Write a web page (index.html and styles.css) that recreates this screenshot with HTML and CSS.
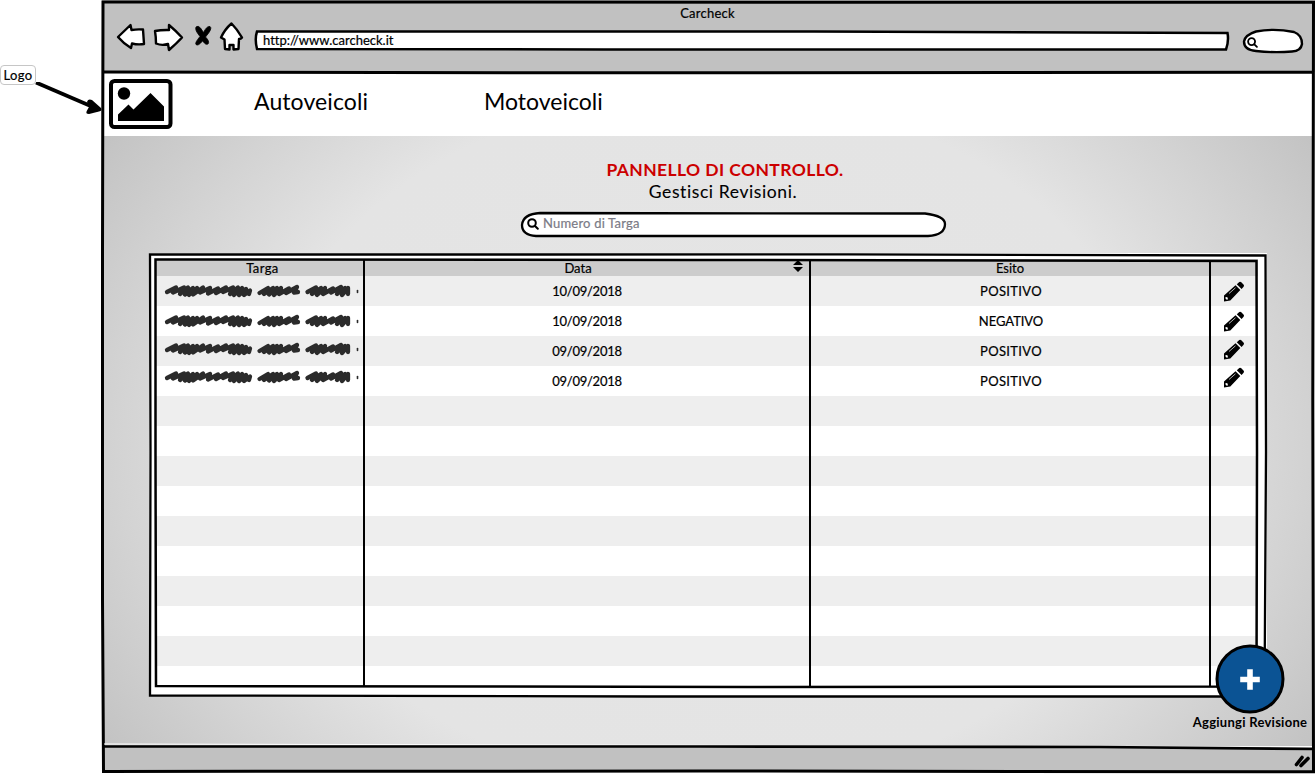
FILE: index.html
```html
<!DOCTYPE html>
<html lang="it">
<head>
<meta charset="utf-8">
<title>Carcheck</title>
<link rel="stylesheet" href="styles.css">
</head>
<body>
<svg class="symbols" aria-hidden="true">
  <symbol id="scribble" viewBox="0 0 196 16">
    <g fill="none" stroke="#2b2b2b" stroke-width="4.300" stroke-linecap="round" stroke-linejoin="round">
      <path d="M3 9 L12 4.500 L9 9.500 L20 4.500 L16 11 L24 4.500 L21 11.500 L29 5 L25 12 L33 5 L29 11.500 L39 4.500 L36 9.500 L46 5 L44 10.500 L54 5.500 L52 10 L62 4.500 L59 9 L69 4.500 L66 11 L74 4.500 L70 12 L78 5 L75 12 L82 6 L80 12 L86 7.500 L85 11"/>
      <path d="M95.500 10 L104 5 L100 11 L109 5 L105 11.500 L113 5 L110 12 L117 5 L115 11 L125 5.500 L122 10 L133 4 L130 9.500 L134 9"/>
      <path d="M143.500 9 L152 4.500 L148 11 L157 5 L153 12 L161 5 L159 11 L169 5.500 L167 9.500 L177 4 L173 11 L181 5 L178 12 L184 5 L184 11"/>
      <path d="M193.500 7.500 v2" stroke-width="1.600"/>
    </g>
  </symbol>
  <symbol id="pencil" viewBox="0 0 22 22">
    <path d="M1 14.500 L12.500 4.300 L17.300 9.100 L7.300 19.500 L1 20.500 Z M13.800 3.300 L16.300 1 Q17.300.3 18.300 1.200 L20.700 3.700 Q21.400 4.700 20.600 5.700 L18.600 7.900 Z"/>
    <path d="M6 12.500 L12.500 6.800" stroke="#fff" stroke-width=".7" fill="none"/>
    <path d="M2.600 16 L4.400 16.300 L5 18.300 L3.800 18.800 L2.500 17.600 Z" fill="#fff"/>
  </symbol>
  <symbol id="lens" viewBox="0 0 12 12">
    <g fill="none" stroke="#000" stroke-width="2" stroke-linecap="round"><circle cx="5" cy="5" r="3.800"/><path d="M8 8 L10.800 10.800"/></g>
  </symbol>
</svg>
<div class="mockup">
  <aside class="notes">
    <span class="callout">Logo</span>
    <svg class="callout-arrow" viewBox="0 0 70 36"><path d="M1 .5 L58 25" fill="none" stroke="#000" stroke-width="3.800"/><path d="M52 20 Q53 16.500 57 18 L66 26 Q67.500 29 64 29.500 L54 32 Q50 32 52 28.500 L54 25 Z"/></svg>
  </aside>
  <div class="browser">
    <header class="chrome">
      <div class="title"><span class="t-title">Carcheck</span></div>
      <div class="toolbar">
        <svg class="nav-icons" viewBox="0 0 132 32" fill="#fff" stroke="#000" stroke-width="2.400" stroke-linejoin="round">
          <path d="M3 16 L15.500 4 L16.500 9 Q22 8 28 8.500 Q28.500 16 29 23 Q23 24 17 22.500 L16 27 Q8 22 3 16 Z"/>
          <path d="M40 10 Q46 8.800 54 9 L54 4 Q60 9 67 16.500 Q62 22 54 29 L53 23 Q47 25 41 22.500 Q41 16 40 10 Z"/>
          <path d="M81 6 Q83 4 85.500 7 L88.500 11.500 Q92 4.500 95 5.500 Q97 7 94 11.500 L90.500 16 Q95 20.500 93 23 Q91 24.500 87.500 20 Q83 25.500 81 23.500 Q79.500 22 85 15.500 Q79.500 9 81 6Z" fill="#000" stroke-width=".8"/>
          <path d="M116.500 2.500 Q122 8 127 16.500 Q126 18 124 18 L123.500 28 L118.500 28.500 L118.500 24 L114.500 24 L114.500 28.500 L110 28 L109.500 18.500 L106 16.500 Q110 8 116.500 2.500 Z"/>
        </svg>
        <div class="address">
          <svg class="outline" viewBox="0 0 976 24" fill="#fff" stroke="#000" stroke-width="2.500"><path d="M3 3.500 Q350 3 560 3.500 T973.500 5 Q975 13 972 21.500 Q500 21.500 350 21.500 T3 21 Q.5 11 3 3.500 Z"/></svg>
          <span class="t-url">http://www.carcheck.it</span>
        </div>
        <div class="quick-search">
          <svg class="outline" viewBox="0 0 62 28" fill="#fff" stroke="#000" stroke-width="2.400"><path d="M14 4.500 Q32 1 52 5 Q60 8 60 17 Q59 24 50 24.500 Q32 26 14 24 Q2 23 2 14.500 Q3 8 14 4.500 Z"/></svg>
          <svg class="quick-lens"><use href="#lens"/></svg>
        </div>
      </div>
    </header>
    <nav class="site-nav">
      <svg class="logo" viewBox="0 0 64 50"><rect x="2" y="2" width="59.500" height="46" rx="3.500" fill="#fff" stroke="#000" stroke-width="4"/><circle cx="15" cy="14.500" r="6.200"/><path d="M9 42 V35.500 L19.500 25.500 L24.500 30.500 L41.500 14 L55 27.500 V42 Z"/></svg>
      <a class="link-auto">Autoveicoli</a>
      <a class="link-moto">Motoveicoli</a>
    </nav>
    <main class="panel">
      <h1><span>PANNELLO DI CONTROLLO.</span></h1>
      <h2><span>Gestisci Revisioni.</span></h2>
      <label class="search">
        <svg class="outline" viewBox="0 0 427 28" fill="#fff" stroke="#000" stroke-width="2.300"><path d="M20 3 Q180 2.500 405 3.500 Q425 6 425 14 Q425 25 408 26 L16 26 Q2 25 2 15 Q3 4 20 3 Z"/></svg>
        <svg class="search-lens"><use href="#lens"/></svg>
        <span class="t-search">Numero di Targa</span>
      </label>
      <section class="frame">
        <div class="grid head">
          <span><b class="h-targa">Targa</b></span><span class="h-cell-data"><b class="h-data">Data</b><svg class="sort" viewBox="0 0 10 12"><path d="M5 0 L10 5 H0 Z M0 7 H10 L5 12 Z"/></svg></span><span><b class="h-esito">Esito</b></span><span></span>
        </div>
        <div class="rows">
          <div class="grid row"><svg class="scribble"><use href="#scribble"/></svg><time>10/09/2018</time><span class="esito">POSITIVO</span><svg class="pencil"><use href="#pencil"/></svg></div>
          <div class="grid row"><svg class="scribble"><use href="#scribble"/></svg><time>10/09/2018</time><span class="esito neg">NEGATIVO</span><svg class="pencil"><use href="#pencil"/></svg></div>
          <div class="grid row up-a"><svg class="scribble"><use href="#scribble"/></svg><time>09/09/2018</time><span class="esito">POSITIVO</span><svg class="pencil"><use href="#pencil"/></svg></div>
          <div class="grid row up-b"><svg class="scribble"><use href="#scribble"/></svg><time>09/09/2018</time><span class="esito">POSITIVO</span><svg class="pencil"><use href="#pencil"/></svg></div>
          <div class="row"></div><div class="row"></div><div class="row"></div><div class="row"></div><div class="row"></div>
          <div class="row"></div><div class="row"></div><div class="row"></div><div class="row"></div><div class="row"></div>
        </div>
        <svg class="table-lines" viewBox="0 0 1120 446" fill="none" stroke="#000">
          <path stroke-width="2.300" d="M2 2.500 L400 2.500 L700 2.400 L1117.500 3.500 L1118 200 L1116.500 444.500 L500 444.500 L2 443.500 L2.500 200 Z"/>
          <path stroke-width="2.500" d="M7.500 7.500 L550 8 L1108.500 9 L1109 200 L1108.500 434.500 L600 435 L8 434 L7.500 200 Z"/>
          <path stroke-width="2" d="M216 8 V435 M662 8 V435 M1062 8 V435"/>
        </svg>
      </section>
      <button class="add">
        <svg class="add-icon" viewBox="0 0 70 70"><circle cx="35" cy="35" r="33" fill="#0b5394" stroke="#000" stroke-width="3"/><path d="M35 28 V43 M28 35.500 H42" stroke="#fff" stroke-width="5.600" stroke-linecap="square"/></svg>
        <span class="add-label">Aggiungi Revisione</span>
      </button>
    </main>
    <footer class="status"></footer>
    <svg class="window-lines" viewBox="0 0 1215 774" fill="none" stroke="#000" stroke-width="3">
      <path d="M3 2 L1213.500 2.300 L1212.800 400 L1213.500 771.800 L600 771 L3.500 771.500 L2.500 600 L2.500 250 Z"/>
      <path d="M2 72 L500 72.800 L1213 72.300"/>
      <path d="M4 744 L1212 746.500" stroke="#fff" stroke-width="1"/>
      <path d="M3 746.500 H600 L1000 747 L1213 749" stroke-width="2.600"/>
      <path d="M1196.500 764.500 L1202 757.500 M1201 765.500 L1208 758.500" stroke-width="3.600" stroke-linecap="round"/>
    </svg>
  </div>
</div>
</body>
</html>
```
FILE: styles.css
```css
* { box-sizing: border-box; }
body { margin: 0; background: #fff; color: #000; font-family: Lato, "Liberation Sans", sans-serif; font-size: 13px; font-variant-ligatures: none; -webkit-text-stroke: .2px currentColor; overflow: hidden; }
svg { display: block; }
.symbols { position: absolute; width: 0; height: 0; }
.mockup { display: flex; width: 1315px; height: 774px; }
.notes { flex: 0 0 100px; position: relative; z-index: 2; padding-top: 65px; }
.callout { display: block; width: 36px; height: 20px; border: 1px solid #c6c6c6; border-radius: 4px; font-size: 13px; line-height: 18px; letter-spacing: .3px; text-align: center; background: #fff; }
.callout-arrow { position: absolute; left: 35px; top: 82px; width: 70px; height: 36px; }
.browser { flex: 1; position: relative; display: flex; flex-direction: column; }
.outline { position: absolute; left: 0; top: 0; width: 100%; height: 100%; }
.window-lines { position: absolute; left: 0; top: 0; width: 1215px; height: 774px; pointer-events: none; }

.chrome { height: 72px; margin-left: 2px; background: #c1c1c1; padding-top: 5px; }
.title { height: 16px; padding-right: 2px; line-height: 17px; letter-spacing: .25px; text-align: center; }
.toolbar { display: flex; height: 32px; padding-left: 13px; }
.nav-icons { width: 132px; height: 32px; }
.address { position: relative; width: 976px; height: 24px; margin: 7px 0 0 7px; padding-left: 9px; line-height: 24px; }
.address span, .search span { position: relative; }
.quick-search { position: relative; width: 62px; height: 28px; margin: 6px 0 0 12px; padding: 10px 0 0 5px; }
.quick-lens { position: relative; width: 11px; height: 11px; }

.site-nav { display: flex; height: 64px; margin-left: 3px; padding: 7px 0 0 6px; font-size: 23px; line-height: 44px; background: #fff; -webkit-text-stroke-width: 0; }
.logo { width: 64px; height: 50px; }
.link-auto { width: 230px; margin-left: 81px; letter-spacing: .1px; }

.panel { position: relative; height: 609px; margin: 0 2px 0 4px; padding: 23px 0 0 45px; background: radial-gradient(ellipse 62% 95% at 50% 50%, #e5e5e5 0%, #e4e4e4 60%, #d3d3d3 79%, #c1c1c1 98%, #b8b8b8 112%); }
h1, h2 { margin: 0; width: 1152px; height: 22px; line-height: 22px; font-weight: 400; font-size: 18px; text-align: center; }
h1 { color: #c00; font-size: 17.5px; font-weight: 700; letter-spacing: .4px; -webkit-text-stroke-width: 0; }
h2 { width: 1148px; height: 20px; font-size: 17.5px; letter-spacing: .6px; -webkit-text-stroke-width: .1px; }
.search { position: relative; display: flex; gap: 4px; width: 427px; height: 28px; margin: 9px 0 0 371px; padding: 8px 0 0 7px; line-height: 11px; letter-spacing: .2px; color: #7b7b86; }
.search-lens { position: relative; width: 12px; height: 12px; }
.frame { position: relative; width: 1118px; height: 443px; margin: 15px 0 0 0; padding: 6px 9px 0 7px; background: #fff; }
.table-lines { position: absolute; left: -1px; top: -1px; width: 1120px; height: 446px; }
.grid { display: grid; grid-template-columns: 208px 446px 400px 48px; align-items: center; text-align: center; }
.head { height: 17px; background: #ccc; line-height: 18px; }
.head b { font-weight: 400; }
.h-targa { padding-left: 5px; letter-spacing: .4px; }
.h-cell-data { position: relative; padding-right: 18px; }
.sort { position: absolute; right: 7px; top: 1px; width: 10px; height: 12px; }
.rows { height: 410px; overflow: hidden; }
.row { height: 30px; }
.row:nth-child(odd) { background: #eee; }
.row time { letter-spacing: -.25px; }
.esito { padding-left: 2px; letter-spacing: .35px; }
.neg { letter-spacing: -.05px; }
.scribble { width: 196px; height: 16px; margin-left: 8px; }
.pencil { width: 22px; height: 22px; margin-left: 13px; transform: translateY(1px); }
.up-a .scribble { transform: translateY(-2px); }
.up-a .pencil { transform: translateY(-1px); }
.up-b .scribble { transform: translateY(-4px); }
.up-b .pencil { transform: translateY(-3px); }
.add { position: absolute; left: 1086px; top: 508px; width: 120px; padding: 0; border: 0; background: none; color: #000; font: inherit; font-weight: 700; letter-spacing: .27px; display: flex; flex-direction: column; align-items: center; }
.add-icon { width: 70px; height: 70px; }
.add-label { line-height: 16px; white-space: nowrap; -webkit-text-stroke-width: 0; }
.status { height: 27px; margin: 0 2px 0 3px; background: #c1c1c1; }
```
